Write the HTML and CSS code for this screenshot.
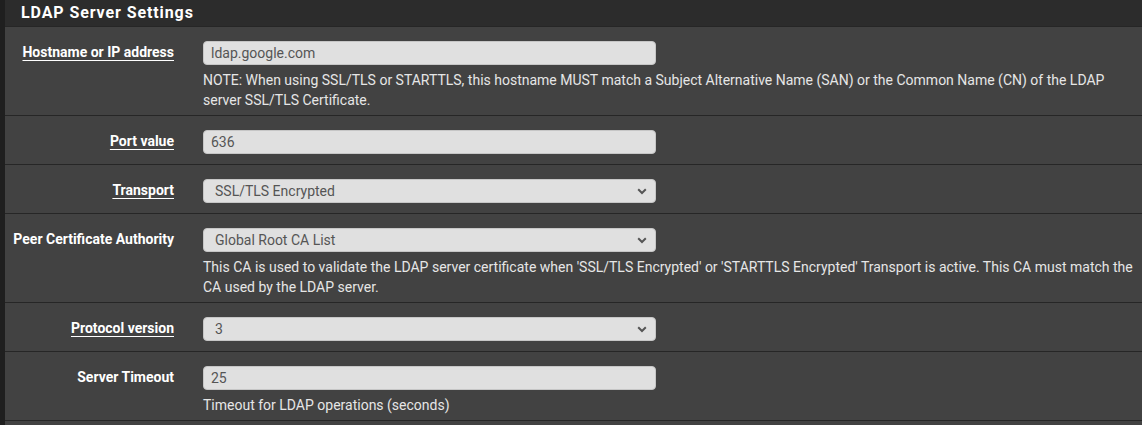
FILE: index.html
```html
<!DOCTYPE html>
<html lang="en">
<head>
<meta charset="utf-8">
<title>LDAP Server Settings</title>
<link rel="stylesheet" href="styles.css">
</head>
<body>
<div class="page">
  <section class="panel">
    <div class="panel-heading"><h2 class="panel-title">LDAP Server Settings</h2></div>
    <div class="panel-body">
      <div class="form-row">
        <div class="label-col"><span class="label has-help">Hostname or IP address</span></div>
        <div class="control-col">
          <input class="text-input" type="text" value="ldap.google.com">
          <div class="help">NOTE: When using SSL/TLS or STARTTLS, this hostname MUST match a Subject Alternative Name (SAN) or the Common Name (CN) of the LDAP server SSL/TLS Certificate.</div>
        </div>
      </div>
      <div class="form-row">
        <div class="label-col"><span class="label has-help">Port value</span></div>
        <div class="control-col">
          <input class="text-input" type="text" value="636">
        </div>
      </div>
      <div class="form-row">
        <div class="label-col"><span class="label has-help">Transport</span></div>
        <div class="control-col">
          <div class="select-wrap">
            <select class="select-input"><option>SSL/TLS Encrypted</option></select>
            <svg class="chevron" width="10" height="7" viewBox="0 0 10 7"><path d="M1.2 1.3 L5 5 L8.8 1.3" fill="none" stroke="#555" stroke-width="2"/></svg>
          </div>
        </div>
      </div>
      <div class="form-row">
        <div class="label-col"><span class="label">Peer Certificate Authority</span></div>
        <div class="control-col">
          <div class="select-wrap">
            <select class="select-input"><option>Global Root CA List</option></select>
            <svg class="chevron" width="10" height="7" viewBox="0 0 10 7"><path d="M1.2 1.3 L5 5 L8.8 1.3" fill="none" stroke="#555" stroke-width="2"/></svg>
          </div>
          <div class="help">This CA is used to validate the LDAP server certificate when 'SSL/TLS Encrypted' or 'STARTTLS Encrypted' Transport is active. This CA must match the CA used by the LDAP server.</div>
        </div>
      </div>
      <div class="form-row">
        <div class="label-col"><span class="label has-help">Protocol version</span></div>
        <div class="control-col">
          <div class="select-wrap">
            <select class="select-input"><option>3</option></select>
            <svg class="chevron" width="10" height="7" viewBox="0 0 10 7"><path d="M1.2 1.3 L5 5 L8.8 1.3" fill="none" stroke="#555" stroke-width="2"/></svg>
          </div>
        </div>
      </div>
      <div class="form-row">
        <div class="label-col"><span class="label">Server Timeout</span></div>
        <div class="control-col">
          <input class="text-input" type="text" value="25">
          <div class="help">Timeout for LDAP operations (seconds)</div>
        </div>
      </div>
    </div>
  </section>
</div>
</body>
</html>
```

FILE: styles.css
```css
html, body {
  margin: 0;
  padding: 0;
  background: #1f1f1f;
  font-family: Roboto, "Liberation Sans", sans-serif;
}

.page {
  padding-left: 5px;
  height: 425px;
  overflow: hidden;
}

.panel {
  background: #424242;
  min-height: 425px;
}

.panel-heading {
  background: #2c2c2c;
  height: 26px;
  border-bottom: 1px solid #262626;
  padding-left: 16px;
}

.panel-title {
  margin: 0;
  font-size: 16px;
  font-weight: 700;
  line-height: 26px;
  color: #ffffff;
  letter-spacing: 0.9px;
}

.form-row {
  display: grid;
  grid-template-columns: 184px 1fr;
  padding: 14px 0 5px;
  border-bottom: 1px solid #262626;
}

.label-col {
  padding-right: 15px;
  text-align: right;
  padding-top: 1px;
}

.label {
  font-size: 14px;
  font-weight: 700;
  line-height: 20px;
  color: #ffffff;
}

.label.has-help {
  text-decoration: underline;
  text-decoration-thickness: 1px;
  text-underline-offset: 3px;
}

.control-col {
  padding-left: 14px;
}

.text-input,
.select-input {
  display: block;
  box-sizing: border-box;
  width: 453px;
  height: 24px;
  margin: 0 0 5px;
  background: #e0e0e0;
  border: 1px solid #c6c6c6;
  border-radius: 4px;
  font-family: Roboto, "Liberation Sans", sans-serif;
  font-size: 14px;
  color: #555555;
  outline: none;
}

.text-input {
  padding: 0 7px;
}

.select-input {
  padding: 0 24px 0 11px;
  appearance: none;
  -webkit-appearance: none;
}

.select-wrap {
  position: relative;
  width: 453px;
}

.chevron {
  position: absolute;
  right: 9px;
  top: 9px;
}

.help {
  margin-top: 1px;
  font-size: 14px;
  line-height: 20px;
  color: #e6e6e6;
  max-width: 939px;
}
```
